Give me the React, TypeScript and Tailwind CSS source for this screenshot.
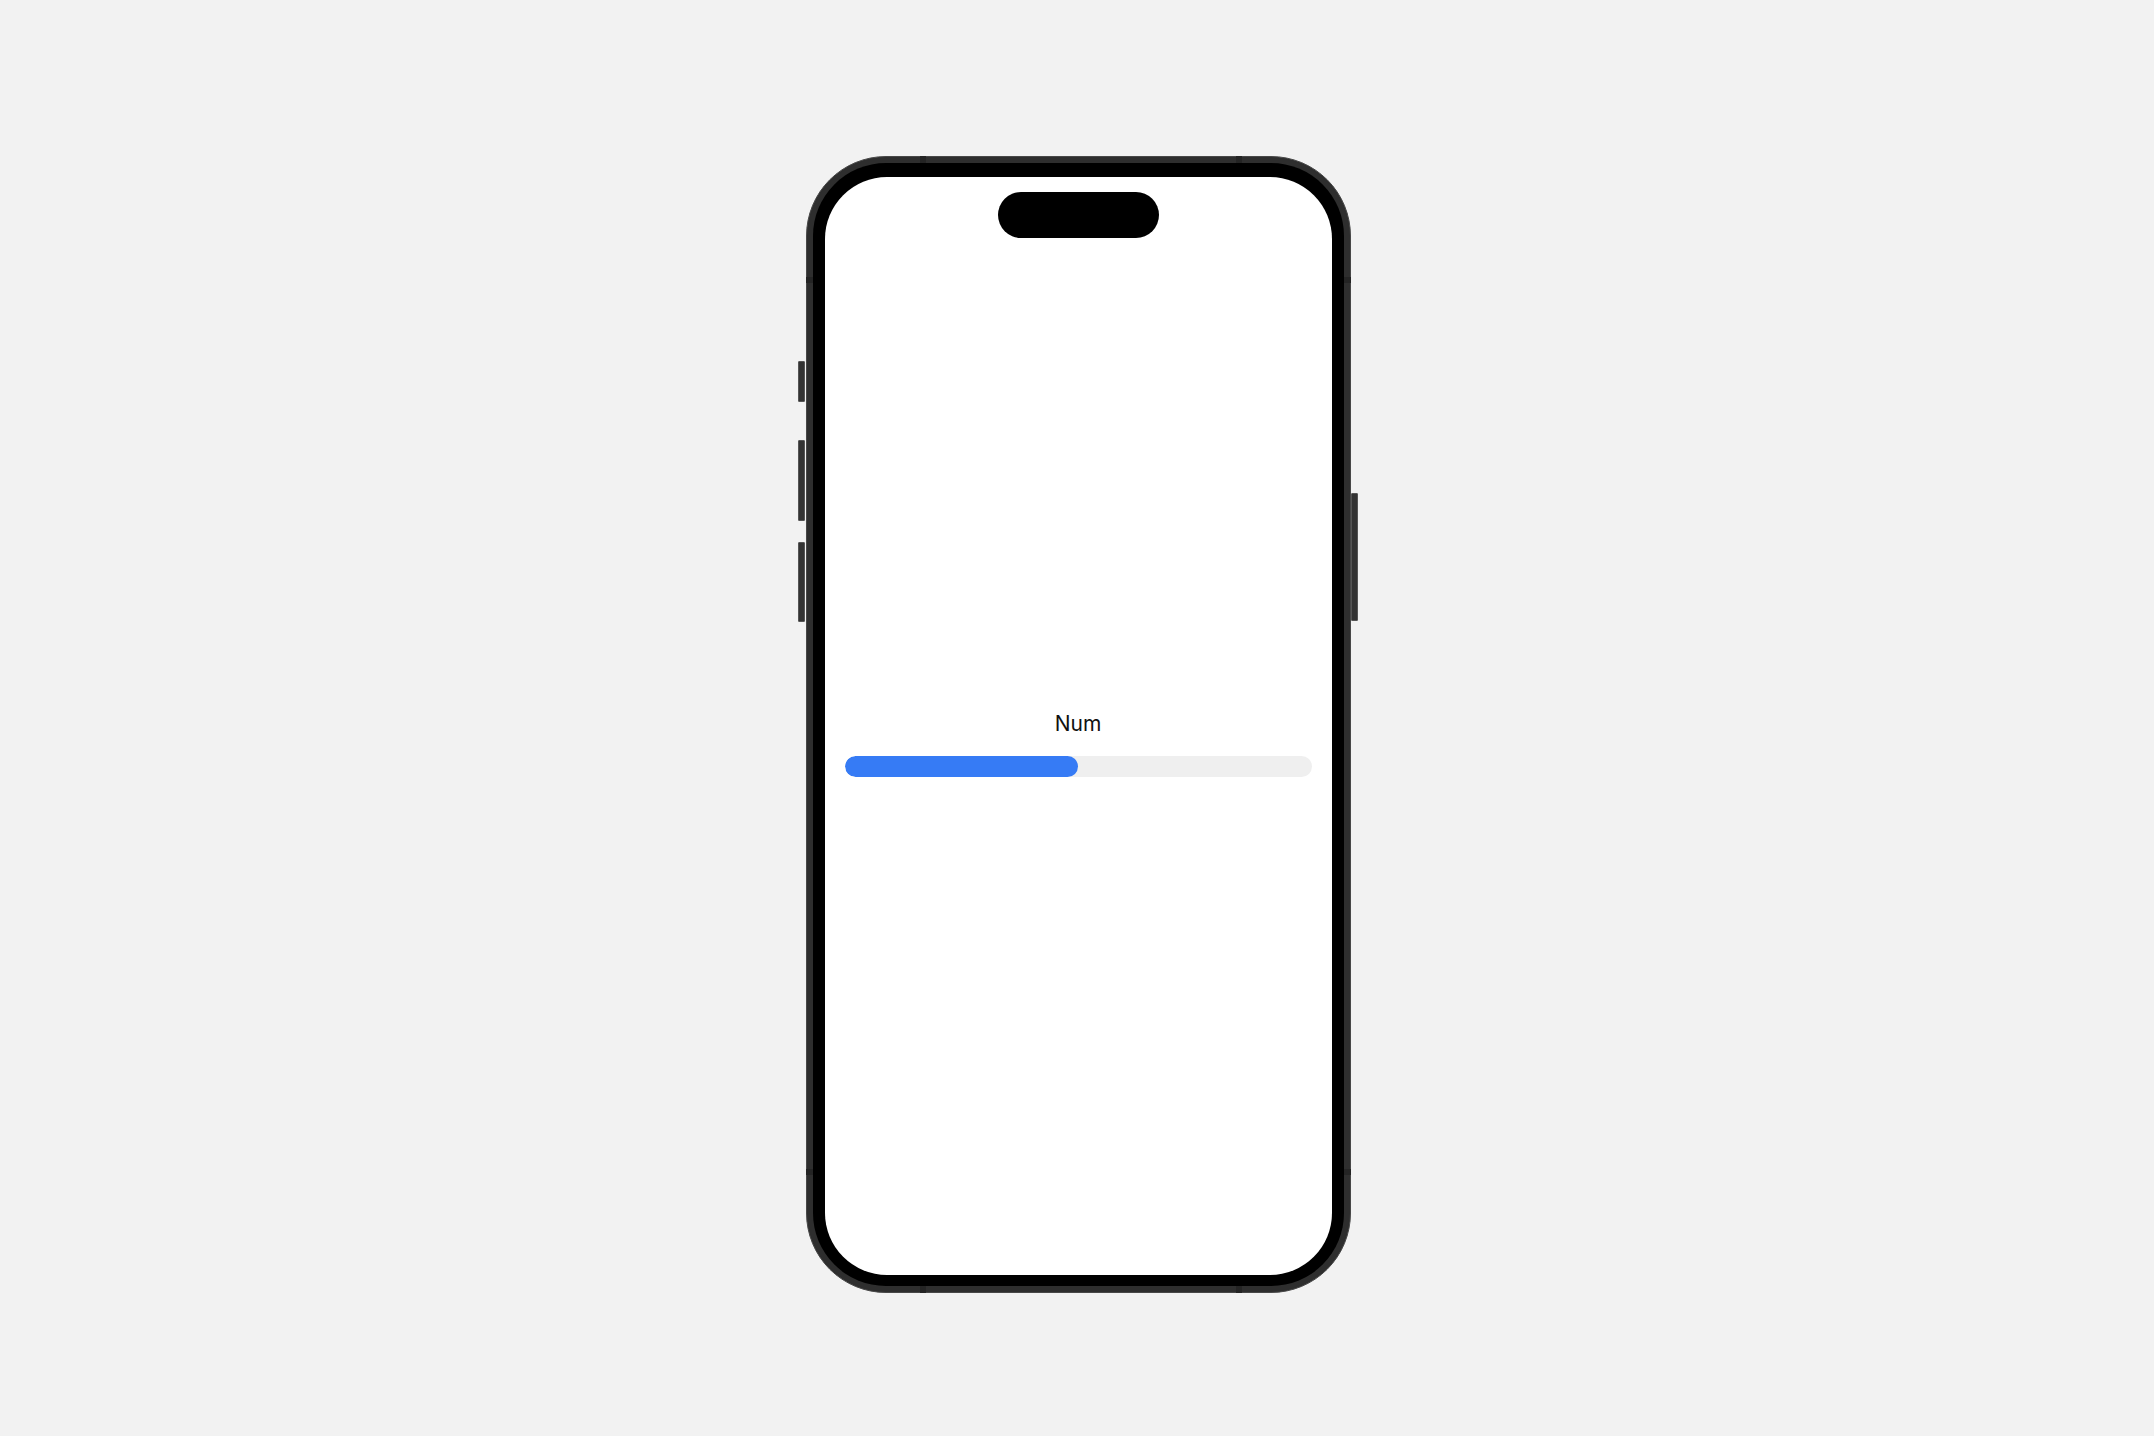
import React from 'react'

const progress = 50

function SideButton({ className }: { className: string }) {
  return <div className={`absolute w-[7px] rounded-[1px] border border-[#555] bg-[#333] ${className}`} />
}

// antenna breaks cut into the metal band
function BandMark({ className }: { className: string }) {
  return <div className={`absolute bg-[#242424] ${className}`} />
}

function ProgressBar({ value }: { value: number }) {
  return (
    <div className="h-[21px] w-full overflow-hidden rounded-full bg-[#efefef]">
      <div className="h-full rounded-full bg-[#367bf5]" style={{ width: `${value}%` }} />
    </div>
  )
}

export default function App() {
  return (
    <div className="flex min-h-[1436px] w-full justify-center bg-[#f2f2f2] pt-[156px] font-['Inter','Liberation_Sans',sans-serif]">
      <div className="relative ml-[2px] h-[1137px] w-[545px]">
        {/* volume / action buttons */}
        <SideButton className="left-[-8px] top-[205px] h-[41px]" />
        <SideButton className="left-[-8px] top-[284px] h-[81px]" />
        <SideButton className="left-[-8px] top-[386px] h-[80px]" />
        {/* power button */}
        <SideButton className="right-[-7px] top-[337px] h-[128px] w-[6px]" />

        <div className="h-full w-full rounded-[80px] border border-[#484848] bg-[#2e2e2e] p-[6px]">
          <div className="h-full w-full rounded-[73px] bg-black px-[12px] pb-[11px] pt-[14px]">
            <div className="flex h-full w-full flex-col items-center rounded-[62px] bg-white">
              <div className="mt-[15px] h-[46px] w-[161px] rounded-full bg-black" />

              <div className="mt-[472px] text-[21px] leading-[28px] text-[#111]">Num</div>
              <div className="mt-[18px] w-full px-[20px]">
                <ProgressBar value={progress} />
              </div>
            </div>
          </div>
        </div>

        <BandMark className="left-0 top-[121px] h-[6px] w-[7px]" />
        <BandMark className="right-0 top-[121px] h-[6px] w-[7px]" />
        <BandMark className="bottom-[118px] left-0 h-[6px] w-[7px]" />
        <BandMark className="bottom-[118px] right-0 h-[6px] w-[7px]" />
        <BandMark className="left-[114px] top-0 h-[7px] w-[6px]" />
        <BandMark className="left-[430px] top-0 h-[7px] w-[6px]" />
        <BandMark className="bottom-0 left-[114px] h-[7px] w-[6px]" />
        <BandMark className="bottom-0 left-[430px] h-[7px] w-[6px]" />
      </div>
    </div>
  )
}
